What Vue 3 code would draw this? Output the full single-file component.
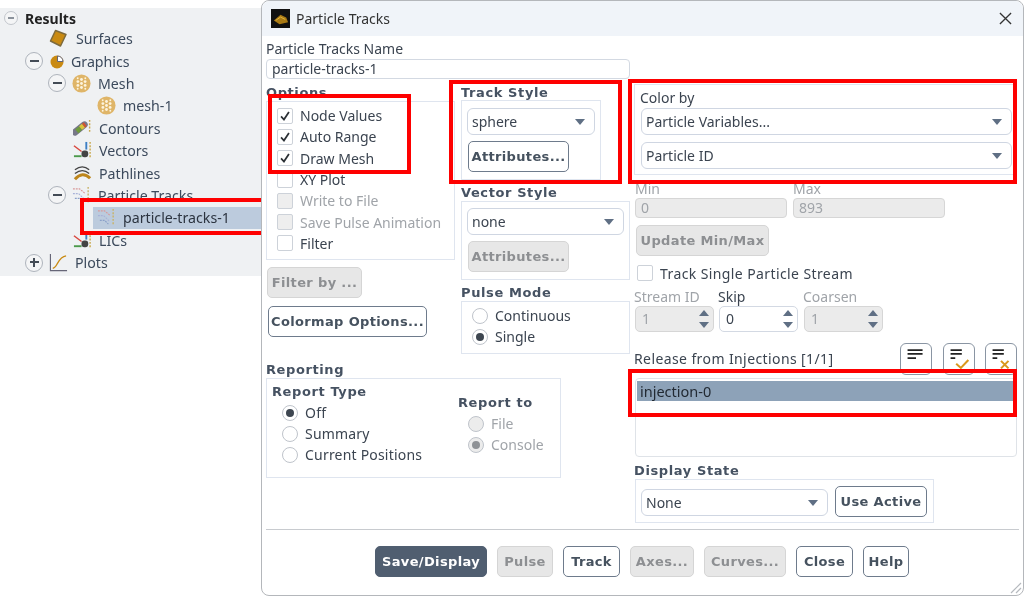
<script setup>
const treeRows = [
  { label: 'Results', pad: 4, toggle: 'minus', small: true, gap: 7, strong: true, cls: 'first' },
  { label: 'Surfaces', pad: 48, icon: 'surface', gap: 9 },
  { label: 'Graphics', pad: 25, toggle: 'minus', icon: 'pie', gap: 3 },
  { label: 'Mesh', pad: 48, toggle: 'minus', icon: 'mesh', gap: 7 },
  { label: 'mesh-1', pad: 97, icon: 'mesh', gap: 7 },
  { label: 'Contours', pad: 73, icon: 'contour', gap: 7 },
  { label: 'Vectors', pad: 73, icon: 'vector', gap: 7 },
  { label: 'Pathlines', pad: 73, icon: 'path', gap: 7 },
  { label: 'Particle Tracks', pad: 48, toggle: 'minus', icon: 'track', gap: 7 },
  { label: 'particle-tracks-1', pad: 4, icon: 'track', gap: 7, selected: true },
  { label: 'LICs', pad: 73, icon: 'vector', gap: 7 },
  { label: 'Plots', pad: 25, toggle: 'plus', icon: 'plot', gap: 7 }
]
const optionRows = [
  { label: 'Node Values', checked: true },
  { label: 'Auto Range', checked: true },
  { label: 'Draw Mesh', checked: true },
  { label: 'XY Plot' },
  { label: 'Write to File', disabled: true },
  { label: 'Save Pulse Animation', disabled: true },
  { label: 'Filter' }
]
const spinners = [
  { label: 'Stream ID', value: '1', disabled: true },
  { label: 'Skip', value: '0' },
  { label: 'Coarsen', value: '1', disabled: true }
]
const footer = [
  { label: 'Save/Display', w: 112, kind: 'primary' },
  { label: 'Pulse', w: 56, kind: 'off' },
  { label: 'Track', w: 57, kind: 'on' },
  { label: 'Axes...', w: 64, kind: 'off' },
  { label: 'Curves...', w: 82, kind: 'off' },
  { label: 'Close', w: 57, kind: 'on' },
  { label: 'Help', w: 46, kind: 'on' }
]
</script>

<template>
  <div class="page">
    <aside class="tree">
      <div
        v-for="r in treeRows"
        :key="r.label"
        class="row"
        :class="[r.cls, { selected: r.selected, strong: r.strong }]"
        :style="{ paddingLeft: r.pad + 'px' }"
      >
        <span v-if="r.toggle" class="toggle" :class="{ small: r.small }">
          <i class="h"></i><i v-if="r.toggle === 'plus'" class="v"></i>
        </span>
        <span v-if="r.icon" class="ic" :class="{ aftertoggle: r.toggle }">
          <svg v-if="r.icon === 'surface'" viewBox="0 0 19 19"><path d="M7.500 1.500 18 5.500 12.500 17 2.500 12Z" fill="#c98a12" stroke="#7d6a3c" stroke-width="1.500" stroke-linejoin="round"/></svg>
          <svg v-else-if="r.icon === 'pie'" viewBox="0 0 19 19"><circle cx="8" cy="10" r="6.500" fill="#c98a12"/><path d="M8.500 4V9.500H14A6 6 0 0 0 8.500 4Z" fill="#fff" stroke="#667" stroke-width="1"/></svg>
          <svg v-else-if="r.icon === 'mesh'" viewBox="0 0 20 20"><circle cx="10" cy="10" r="9.500" fill="#dfb568"/><g fill="#fdf4de"><circle cx="10" cy="10" r="1.500"/><circle cx="10" cy="5.800" r="1.500"/><circle cx="10" cy="14.200" r="1.500"/><circle cx="6.200" cy="8" r="1.500"/><circle cx="13.800" cy="8" r="1.500"/><circle cx="6.200" cy="12" r="1.500"/><circle cx="13.800" cy="12" r="1.500"/><circle cx="6" cy="4.500" r="1"/><circle cx="14" cy="4.500" r="1"/><circle cx="6" cy="15.500" r="1"/><circle cx="14" cy="15.500" r="1"/></g></svg>
          <svg v-else-if="r.icon === 'contour'" viewBox="0 0 20 20"><path d="M2 14 12 6" stroke="#778" stroke-width="7" stroke-linecap="round"/><path d="M4 13 8 9.500" stroke="#6f9b3c" stroke-width="5"/><path d="M8 9.500 11 7" stroke="#d9c53a" stroke-width="5"/><path d="M11 7 13 5.500" stroke="#d2552f" stroke-width="5"/><path d="M17.500 1V15" stroke="#c9a94f" stroke-width="1.500" stroke-dasharray="2 1.500"/></svg>
          <svg v-else-if="r.icon === 'vector'" viewBox="0 0 20 20"><path d="M1 5 9 11" stroke="#d8453c" stroke-width="1.500"/><path d="M1 16H9" stroke="#4c9a4c" stroke-width="2"/><path d="M14 1V9" stroke="#3d7fc4" stroke-width="2"/><rect x="9" y="10" width="7" height="7" rx="3" fill="#444"/><path d="M18 1V18" stroke="#c9a94f" stroke-width="1.500" stroke-dasharray="2 1.500"/></svg>
          <svg v-else-if="r.icon === 'path'" viewBox="0 0 20 20" fill="none"><path d="M2 6Q10 0 17 6" stroke="#444" stroke-width="1.400"/><path d="M2 10Q10 4 17 10" stroke="#444" stroke-width="1.400"/><path d="M2 16Q10 7 18 15" stroke="#bd861c" stroke-width="3.200"/></svg>
          <svg v-else-if="r.icon === 'track'" viewBox="0 0 20 20" fill="none"><path d="M1 3H8L14 8" stroke="#d99a9a" stroke-width="1.200" stroke-dasharray="2 1"/><path d="M1 8H7L13 14" stroke="#a8b2d8" stroke-width="1.200" stroke-dasharray="2 1"/><path d="M3 13H8L12 17" stroke="#8aa0c8" stroke-width="1.200" stroke-dasharray="2 1"/><path d="M17 1V18" stroke="#c9b46a" stroke-width="1.500" stroke-dasharray="2 1.500"/></svg>
          <svg v-else viewBox="0 0 20 20" fill="none"><path d="M1.500 1V18.500H19" stroke="#667" stroke-width="1.200"/><path d="M4 16C9 16 9 4 18 3" stroke="#c98a12" stroke-width="1.500"/></svg>
        </span>
        <span class="row-text" :style="{ marginLeft: r.gap + 'px' }">{{ r.label }}</span>
      </div>
      <div class="mark tree-mark"></div>
    </aside>

    <section class="dialog">
      <header class="titlebar">
        <svg class="logo" viewBox="0 0 20 20"><rect width="20" height="20" fill="#111"/><path d="M3 12 10 6 16 9 18 14 9 16Z" fill="#a97a14"/><path d="M5 12 10 8.500 15 11" stroke="#e3b53f" fill="none"/></svg>
        <span class="title">Particle Tracks</span>
        <svg class="close" viewBox="0 0 14 14"><path d="M1 1 13 13M13 1 1 13" stroke="#333" stroke-width="1.400"/></svg>
      </header>

      <div class="main">
        <div class="leftpart">
          <div class="lbl name-lbl">Particle Tracks Name</div>
          <div class="input name-input">particle-tracks-1</div>

          <div class="cols">
            <div class="col-a">
              <div class="head options-head">Options</div>
              <div class="group options">
                <label v-for="o in optionRows" :key="o.label" class="check" :class="{ dis: o.disabled }">
                  <span class="box">
                    <svg v-if="o.checked" viewBox="0 0 16 16"><path d="M3.500 8.500 6.800 12 12.500 3.500" fill="none" stroke="#2b3035" stroke-width="2"/></svg>
                  </span>{{ o.label }}
                </label>
              </div>
              <button class="btn off filterby">Filter by ...</button>
              <button class="btn on colormap">Colormap Options...</button>
            </div>

            <div class="col-b">
              <div class="head">Track Style</div>
              <div class="group track">
                <div class="select">sphere<i class="caret"></i></div>
                <button class="btn on attr">Attributes...</button>
              </div>
              <div class="head vec-head">Vector Style</div>
              <div class="group vector">
                <div class="select">none<i class="caret"></i></div>
                <button class="btn off attr">Attributes...</button>
              </div>
              <div class="head pulse-head">Pulse Mode</div>
              <div class="group pulse">
                <div class="radio"><i class="dot"></i>Continuous</div>
                <div class="radio"><i class="dot sel"></i>Single</div>
              </div>
            </div>
          </div>

          <div class="head reporting-head">Reporting</div>
          <div class="group reporting">
            <div class="rep-type">
              <div class="head">Report Type</div>
              <div class="radio"><i class="dot sel"></i>Off</div>
              <div class="radio"><i class="dot"></i>Summary</div>
              <div class="radio"><i class="dot"></i>Current Positions</div>
            </div>
            <div class="rep-to">
              <div class="head">Report to</div>
              <div class="radio dis"><i class="dot"></i>File</div>
              <div class="radio dis"><i class="dot sel"></i>Console</div>
            </div>
          </div>
        </div>

        <div class="rightpart">
          <div class="group colorby">
            <div class="lbl">Color by</div>
            <div class="select">Particle Variables...<i class="caret"></i></div>
            <div class="select second">Particle ID<i class="caret"></i></div>
          </div>
          <div class="minmax">
            <div class="mm"><div class="lbl dis">Min</div><div class="input dis">0</div></div>
            <div class="mm"><div class="lbl dis">Max</div><div class="input dis">893</div></div>
          </div>
          <button class="btn off update">Update Min/Max</button>
          <label class="check single"><span class="box"></span>Track Single Particle Stream</label>
          <div class="spins">
            <div v-for="s in spinners" :key="s.label" class="spin-col">
              <div class="lbl" :class="{ dis: s.disabled }">{{ s.label }}</div>
              <div class="spin" :class="{ dis: s.disabled }">
                {{ s.value }}
                <span class="arrows"><i class="up"></i><i class="down"></i></span>
              </div>
            </div>
          </div>
          <div class="release">
            <div class="lbl">Release from Injections [1/1]</div>
            <div class="tools">
              <button class="tool"><svg viewBox="0 0 32 32"><path d="M7 6.500H23M7 10.500H23M7 15H16" stroke="#222" stroke-width="2"/></svg></button>
              <button class="tool"><svg viewBox="0 0 32 32"><path d="M7 6.500H19M7 10.500H19M7 15H12" stroke="#222" stroke-width="2"/><path d="M13 21 18 25.500 26 17" fill="none" stroke="#d9981e" stroke-width="2.200"/></svg></button>
              <button class="tool"><svg viewBox="0 0 32 32"><path d="M7 6.500H19M7 10.500H19M7 15H12" stroke="#222" stroke-width="2"/><path d="M16 18 24 26M24 18 16 26" stroke="#d9981e" stroke-width="2.200"/></svg></button>
            </div>
          </div>
          <div class="listbox"><div class="list-item">injection-0</div></div>
          <div class="head display-head">Display State</div>
          <div class="group display">
            <div class="select">None<i class="caret"></i></div>
            <button class="btn on use">Use Active</button>
          </div>
        </div>
      </div>

      <div class="sep"></div>

      <footer class="footer">
        <button
          v-for="b in footer"
          :key="b.label"
          class="btn fbtn"
          :class="b.kind"
          :style="{ width: b.w + 'px' }"
        >{{ b.label }}</button>
      </footer>

      <svg class="grip" viewBox="0 0 14 14"><path d="M13 3 3 13M13 8 8 13" stroke="#b5b9be" stroke-width="1.200"/></svg>

      <div class="mark m-options"></div>
      <div class="mark m-track"></div>
      <div class="mark m-color"></div>
      <div class="mark m-inject"></div>
    </section>
  </div>
</template>

<style>
html, body { margin: 0; background: #fff; }
</style>

<style scoped>
.page {
  position: relative;
  display: flex;
  width: 1024px;
  height: 596px;
  overflow: hidden;
  background: #fff;
  font-family: "Noto Sans", sans-serif;
  font-size: 14px;
  color: #3b4450;
  filter: blur(0.3px);
}
button { font-family: inherit; padding: 0; margin: 0; }

/* tree */
.tree {
  position: relative;
  box-sizing: border-box;
  flex: 0 0 261px;
  height: 268px;
  margin-top: 8px;
  background: #eff1f3;
}
.row {
  display: flex;
  align-items: center;
  height: 22.4px;
  color: #3c4a5c;
  font-size: 14.200px;
  white-space: nowrap;
}
.row.first { height: 20px; margin-bottom: -0.5px; }
.row.strong { color: #222; font-weight: 700; font-size: 14px; }
.row.selected {
  margin-left: 93px;
  background: #bccbdd;
  color: #2c3440;
}
.toggle {
  position: relative;
  box-sizing: border-box;
  flex: none;
  width: 18px;
  height: 18px;
  border: 1.500px solid #aeb4bc;
  border-radius: 50%;
  background: #f4f5f6;
}
.toggle.small { width: 14px; height: 14px; border-color: #c2c6cc; }
.toggle .h { position: absolute; left: 3.500px; right: 3.500px; top: 6.500px; height: 2px; background: #444c56; }
.toggle .v { position: absolute; top: 3.500px; bottom: 3.500px; left: 6.500px; width: 2px; background: #444c56; }
.toggle.small .h { left: 3px; right: 3px; top: 4.500px; height: 2px; background: #8b929b; }
.ic { flex: none; width: 19px; height: 19px; display: flex; }
.ic svg { width: 100%; height: 100%; display: block; }
.ic.aftertoggle { margin-left: 6px; }

/* dialog */
.dialog {
  position: relative;
  z-index: 1;
  box-sizing: border-box;
  flex: 0 0 763px;
  height: 596px;
  background: #fff;
  border: 1px solid #b4b7bb;
  border-radius: 8px;
}
.titlebar {
  display: flex;
  align-items: center;
  height: 35px;
  padding-left: 9px;
  background: #f0f4f9;
  border-radius: 8px 8px 0 0;
  color: #333;
}
.logo { width: 19px; height: 19px; flex: none; }
.title { margin-left: 6px; font-size: 14px; }
.close { width: 13px; height: 13px; margin-left: auto; margin-right: 11px; }

.main { display: flex; height: 493px; }
.leftpart { width: 372px; padding-left: 4px; box-sizing: border-box; flex: none; }
.rightpart { flex: 1; padding: 48px 5px 0 0; min-width: 0; }

.lbl { height: 18px; line-height: 17px; font-size: 14px; color: #3b4450; white-space: nowrap; }
.lbl.dis, .dis { color: #a0a4a9; }
.head {
  height: 19px;
  line-height: 21px;
  font-family: "DejaVu Sans", sans-serif;
  font-weight: 700;
  font-size: 13px;
  letter-spacing: 0.6px;
  color: #465262;
  white-space: nowrap;
}
.name-lbl { height: 20px; line-height: 20px; padding-top: 3px; }
.input {
  box-sizing: border-box;
  height: 20px;
  line-height: 18px;
  padding-left: 5px;
  border: 1px solid #d3d9e2;
  border-radius: 4px;
  background: #fff;
  font-size: 14px;
}
.input.dis { background: #ebebeb; border-color: #d6d6d6; }
.name-input { width: 364px; }
.cols { display: flex; margin-top: 3px; height: 272px; }
.col-a { width: 195px; flex: none; }
.col-b { width: 169px; flex: none; }
.group { box-sizing: border-box; border: 1px solid #dfe5ef; }
.options { width: 189px; height: 159px; padding: 3px 0 0 10px; }
.check {
  display: flex;
  align-items: center;
  height: 21.300px;
  color: #3b4450;
  white-space: nowrap;
}
.check.dis { color: #a0a4a9; }
.box {
  box-sizing: border-box;
  display: block;
  flex: none;
  width: 16px;
  height: 16px;
  margin-right: 7px;
  border: 1px solid #cdd2d9;
  border-radius: 2px;
  background: #fff;
}
.box svg { display: block; width: 14px; height: 14px; }
.check.dis .box { background: #eeeeee; }

.btn {
  display: block;
  box-sizing: border-box;
  height: 31px;
  border-radius: 5px;
  font-family: "DejaVu Sans", sans-serif;
  font-weight: 700;
  font-size: 13px;
  letter-spacing: 0.35px;
  text-align: center;
  white-space: nowrap;
}
.btn.on { background: #fff; border: 1.500px solid #6e7b8c; color: #46525f; }
.btn.off { background: #e7e7e7; border: 1px solid #d5d5d5; color: #8d8f92; }
.btn.primary { background: #505e70; border: 1px solid #505e70; color: #fff; }
.filterby { width: 95px; margin: 7px 0 0 1px; }
.colormap { width: 159px; margin: 8px 0 0 2px; }

.select {
  position: relative;
  box-sizing: border-box;
  height: 27px;
  line-height: 25px;
  padding-left: 4px;
  border: 1px solid #cfd6e2;
  border-radius: 6px;
  background: #fff;
  font-size: 14px;
  color: #3b4450;
}
.caret {
  position: absolute;
  right: 9px;
  top: 10px;
  width: 0;
  height: 0;
  border-left: 5px solid transparent;
  border-right: 5px solid transparent;
  border-top: 6px solid #5f6f84;
}
.track { width: 140px; height: 80px; margin-top: -1px; padding: 7px 5px 0; }
.attr { width: 101px; margin: 6px 0 0 1px; }
.vec-head { margin-top: 3px; height: 18px; line-height: 20px; }
.vector { width: 169px; height: 79px; padding: 6px 5px 0; }
.pulse-head { margin-top: 2px; }
.pulse { width: 169px; height: 53px; padding: 3px 0 0 10px; }
.radio {
  display: flex;
  align-items: center;
  height: 21px;
  color: #3b4450;
  white-space: nowrap;
}
.radio.dis { color: #a0a4a9; }
.dot {
  position: relative;
  box-sizing: border-box;
  flex: none;
  width: 16px;
  height: 16px;
  margin-right: 7px;
  border: 1px solid #bfc4cb;
  border-radius: 50%;
  background: #fff;
}
.dot.sel::after {
  content: "";
  position: absolute;
  left: 3px;
  top: 3px;
  width: 8px;
  height: 8px;
  border-radius: 50%;
  background: #3d4650;
}
.radio.dis .dot { background: #ececec; }
.radio.dis .dot.sel::after { background: #8f9296; }

.reporting-head { margin-top: 6px; height: 18px; line-height: 20px; }
.reporting { display: flex; width: 295px; height: 100px; padding-top: 2px; }
.rep-type { width: 191px; flex: none; padding-left: 5px; box-sizing: border-box; }
.rep-type .head { height: 20px; line-height: 22px; margin-bottom: 1px; }
.rep-type .radio { padding-left: 10px; letter-spacing: 0.2px; }
.rep-to { padding-top: 11px; }
.rep-to .head { height: 20px; line-height: 22px; margin-bottom: 1px; }
.rep-to .radio { padding-left: 10px; }

.colorby { width: 381px; height: 91px; padding: 3px 5px 0 6px; }
.colorby .lbl { height: 20px; line-height: 20px; margin-left: -1px; }
.colorby .select { width: 371px; }
.colorby .second { margin-top: 7px; }
.minmax { display: flex; gap: 6px; margin: 5px 0 0 1px; }
.mm { width: 152px; }
.update { width: 133px; margin: 7px 0 0 2px; }
.single { height: 22px; margin: 6px 0 0 3px; letter-spacing: 0.4px; }
.spins { display: flex; margin-top: 4px; }
.spin-col { width: 84px; }
.spin-col:nth-child(2) { width: 85px; }
.spin {
  position: relative;
  box-sizing: border-box;
  width: 79px;
  height: 26px;
  margin-left: 1px;
  padding-left: 6px;
  line-height: 24px;
  border: 1px solid #d3d9e3;
  border-radius: 5px;
  background: #fff;
}
.spin.dis { background: #ebebeb; border-color: #d6d6d6; }
.arrows { position: absolute; right: 3px; top: 3px; width: 11px; height: 18px; }
.up, .down {
  position: absolute;
  left: 0;
  width: 0;
  height: 0;
  border-left: 5px solid transparent;
  border-right: 5px solid transparent;
}
.up { top: 0; border-bottom: 6px solid #5f6f84; }
.down { bottom: 0; border-top: 6px solid #5f6f84; }
.release { display: flex; align-items: center; height: 32px; margin-top: 11px; }
.release .lbl { letter-spacing: 0.4px; line-height: 18px; }
.tools { display: flex; gap: 10.500px; margin-left: auto; margin-right: 1px; }
.tool {
  box-sizing: border-box;
  width: 32px;
  height: 32px;
  border: 1.500px solid #8a95a3;
  border-radius: 6px;
  background: #fff;
}
.tool svg { display: block; width: 100%; height: 100%; }
.listbox {
  box-sizing: border-box;
  width: 382px;
  height: 79px;
  margin: 3px 0 0 1px;
  padding: 2px 0 0 1px;
  border: 1px solid #dfe3e8;
  border-radius: 4px;
}
.list-item {
  height: 20px;
  line-height: 20px;
  padding-left: 3px;
  background: #8da2b8;
  color: #222a33;
  font-size: 14.500px;
}
.display-head { margin-top: 4px; height: 18px; line-height: 20px; }
.display {
  display: flex;
  align-items: flex-start;
  width: 299px;
  height: 44px;
  margin-left: 1px;
  padding: 6px 0 0 5px;
}
.display .select { width: 187px; margin-top: 3px; }
.use { width: 92px; margin-left: 7px; }

.sep { height: 1px; margin: 0 4px; background: #c8cbcf; }
.footer { display: flex; gap: 10px; padding: 16px 0 0 113px; }
.fbtn { flex: none; }

.grip { position: absolute; right: 1px; bottom: 1px; width: 14px; height: 14px; }

.mark { position: absolute; box-sizing: border-box; border: 4px solid #fe0000; pointer-events: none; }
.tree-mark { left: 80px; top: 190px; width: 181px; height: 37px; border-right: 0; }
.m-options { left: 6px; top: 93px; width: 143px; height: 80px; }
.m-track { left: 187px; top: 79px; width: 173px; height: 104px; }
.m-color { left: 366px; top: 78px; width: 389px; height: 105px; }
.m-inject { left: 366px; top: 368px; width: 389px; height: 48px; }
</style>
